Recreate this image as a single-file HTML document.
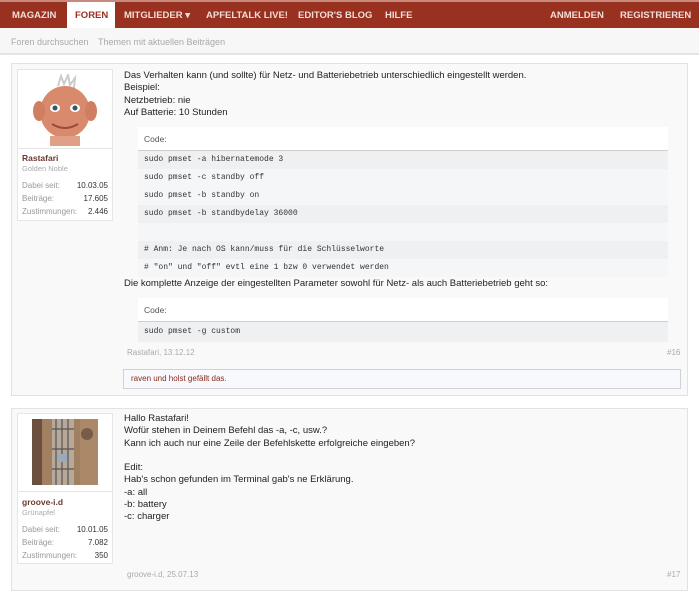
<!DOCTYPE html>
<html><head><meta charset="utf-8"><style>
*{margin:0;padding:0;box-sizing:border-box}
body{width:699px;height:600px;background:#fff;font-family:"Liberation Sans",sans-serif;position:relative;overflow:hidden;color:#222}
.a{position:absolute}
.nav{left:0;top:0;width:699px;height:28px;background:#983120;border-top:2px solid #c98a7e}
.nav span{position:absolute;top:8px;font-size:9.5px;font-weight:bold;color:#f3ddd8;white-space:nowrap}
.sub{left:0;top:28px;width:699px;height:27px;background:#f7f7f7;border-bottom:2px solid #e4e4e4}
.sub span{position:absolute;top:9px;font-size:9px;color:#a9a9a9}
.post{background:#f9f9f9;border:1px solid #e2e2e2}
.ub{background:#fff;border:1px solid #e6e6e6}
.t{font-size:9.5px;line-height:12.3px;color:#222}
.code{left:138px;width:530px;font-family:"Liberation Mono",monospace;font-size:8px;color:#333}
.code div{height:18px;line-height:18px;padding-left:6px}
.g{background:#eef0f2}.l{background:#f5f6f8}
.hd{background:#fff;border-bottom:1px solid #cfcfcf;font-family:"Liberation Sans",sans-serif;font-size:8.5px;color:#555;height:24px!important;line-height:24px!important}
.st{font-size:8px;color:#999}
.sv{font-size:8px;color:#333;text-align:right}
</style></head><body>
<div class="a nav">
<span style="left:12px">MAGAZIN</span>
<div class="a" style="left:67px;top:0;width:48px;height:27px;background:#fff"></div>
<span style="left:75px;color:#983120">FOREN</span>
<span style="left:124px">MITGLIEDER ▾</span>
<span style="left:206px">APFELTALK LIVE!</span>
<span style="left:298px">EDITOR'S BLOG</span>
<span style="left:385px">HILFE</span>
<span style="left:550px">ANMELDEN</span>
<span style="left:620px">REGISTRIEREN</span>
</div>
<div class="a sub"><span style="left:11px">Foren durchsuchen</span><span style="left:98px">Themen mit aktuellen Beiträgen</span></div>

<div class="a post" style="left:11px;top:63px;width:677px;height:333px"></div>
<div class="a ub" style="left:17px;top:69px;width:96px;height:152px"></div>
<svg class="a" style="left:28px;top:74px" width="75" height="72" viewBox="0 0 75 72">
<path d="M30 12 L33 2 L36 10 L40 1 L42 11 L47 4 L46 14" stroke="#ccc" fill="none" stroke-width="2"/>
<ellipse cx="37" cy="38" rx="25" ry="26" fill="#d98a6c"/>
<ellipse cx="11" cy="37" rx="6" ry="10" fill="#cf7e62"/>
<ellipse cx="63" cy="37" rx="6" ry="10" fill="#cf7e62"/>
<ellipse cx="27" cy="34" rx="5" ry="4" fill="#fff"/><circle cx="27" cy="34" r="2.5" fill="#356"/>
<ellipse cx="47" cy="34" rx="5" ry="4" fill="#fff"/><circle cx="47" cy="34" r="2.5" fill="#356"/>
<path d="M24 50 Q37 58 50 50" stroke="#9a4a3a" stroke-width="2" fill="none"/>
<rect x="22" y="62" width="30" height="10" fill="#e0a088"/>
</svg>
<div class="a" style="left:17px;top:148px;width:96px;border-top:1px solid #e6e6e6"></div>
<div class="a" style="left:22px;top:153px;font-size:8.5px;font-weight:bold;color:#6b3a30">Rastafari</div>
<div class="a" style="left:22px;top:164px;font-size:7.5px;color:#aaa">Golden Noble</div>
<div class="a st" style="left:22px;top:181px">Dabei seit:</div><div class="a sv" style="left:60px;top:181px;width:48px">10.03.05</div>
<div class="a st" style="left:22px;top:194px">Beiträge:</div><div class="a sv" style="left:60px;top:194px;width:48px">17.605</div>
<div class="a st" style="left:22px;top:207px">Zustimmungen:</div><div class="a sv" style="left:60px;top:207px;width:48px">2.446</div>

<div class="a t" style="left:124px;top:70px">Das Verhalten kann (und sollte) für Netz- und Batteriebetrieb unterschiedlich eingestellt werden.<br>Beispiel:<br>Netzbetrieb: nie<br>Auf Batterie: 10 Stunden</div>
<div class="a code" style="top:127px">
<div class="hd">Code:</div>
<div class="g">sudo pmset -a hibernatemode 3</div>
<div class="l">sudo pmset -c standby off</div>
<div class="l">sudo pmset -b standby on</div>
<div class="g">sudo pmset -b standbydelay 36000</div>
<div class="l"></div>
<div class="g"># Anm:  Je nach OS kann/muss für die Schlüsselworte</div>
<div class="l"># "on" und "off" evtl eine 1 bzw 0 verwendet werden</div>
</div>
<div class="a t" style="left:124px;top:278px">Die komplette Anzeige der eingestellten Parameter sowohl für Netz- als auch Batteriebetrieb geht so:</div>
<div class="a code" style="top:298px">
<div class="hd">Code:</div>
<div class="g" style="height:20px;line-height:20px">sudo pmset -g custom</div>
</div>
<div class="a" style="left:127px;top:348px;font-size:8px;color:#aaa">Rastafari, 13.12.12</div>
<div class="a" style="left:667px;top:348px;font-size:8px;color:#aaa">#16</div>
<div class="a" style="left:123px;top:369px;width:558px;height:20px;background:#f7f9fc;border:1px solid #cfd3d8;font-size:8px;line-height:18px;padding-left:7px;color:#8a2a1a">raven und holst gefällt das.</div>

<div class="a post" style="left:11px;top:408px;width:677px;height:183px"></div>
<div class="a ub" style="left:17px;top:413px;width:96px;height:151px"></div>
<svg class="a" style="left:32px;top:419px" width="66" height="66" viewBox="0 0 66 66">
<rect width="66" height="66" fill="#a08060"/>
<rect x="0" width="10" height="66" fill="#6b5040"/>
<rect x="20" width="22" height="66" fill="#b8a898"/>
<path d="M24 0V66M30 0V66M36 0V66M20 10H42M20 30H42M20 50H42" stroke="#555" stroke-width="1.2"/>
<rect x="25" y="35" width="10" height="8" fill="#9ab"/>
<circle cx="55" cy="15" r="6" fill="#3a2a20"/>
<rect x="48" width="18" height="66" fill="#b39070" opacity=".5"/>
</svg>
<div class="a" style="left:17px;top:491px;width:96px;border-top:1px solid #e6e6e6"></div>
<div class="a" style="left:22px;top:497px;font-size:8.5px;font-weight:bold;color:#6b3a30">groove-i.d</div>
<div class="a" style="left:22px;top:508px;font-size:7.5px;color:#aaa">Grünapfel</div>
<div class="a st" style="left:22px;top:525px">Dabei seit:</div><div class="a sv" style="left:60px;top:525px;width:48px">10.01.05</div>
<div class="a st" style="left:22px;top:538px">Beiträge:</div><div class="a sv" style="left:60px;top:538px;width:48px">7.082</div>
<div class="a st" style="left:22px;top:551px">Zustimmungen:</div><div class="a sv" style="left:60px;top:551px;width:48px">350</div>
<div class="a t" style="left:124px;top:413px">Hallo Rastafari!<br>Wofür stehen in Deinem Befehl das -a, -c, usw.?<br>Kann ich auch nur eine Zeile der Befehlskette erfolgreiche eingeben?<br><br>Edit:<br>Hab's schon gefunden im Terminal gab's ne Erklärung.<br>-a: all<br>-b: battery<br>-c: charger</div>
<div class="a" style="left:127px;top:570px;font-size:8px;color:#aaa">groove-i.d, 25.07.13</div>
<div class="a" style="left:667px;top:570px;font-size:8px;color:#aaa">#17</div>
</body></html>
